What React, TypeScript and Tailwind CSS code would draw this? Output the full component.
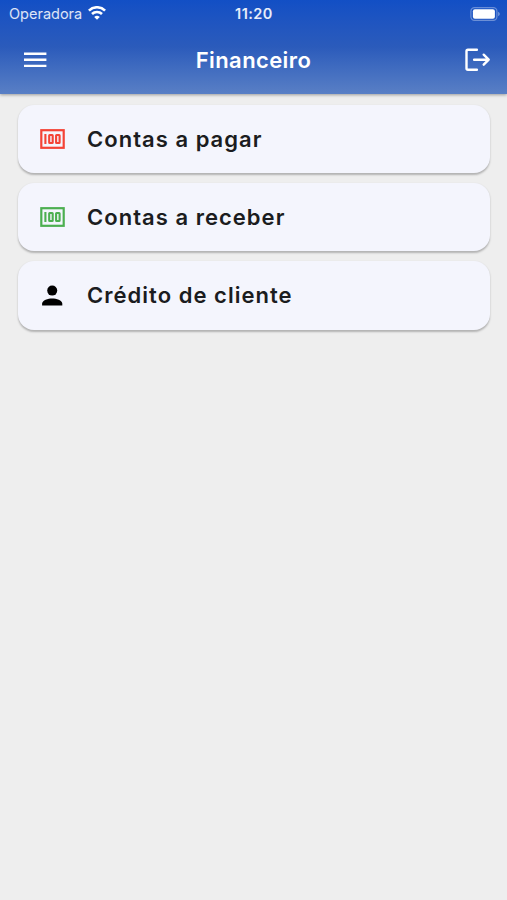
import type { ReactNode } from 'react';

interface MenuItem {
  label: string;
  icon: ReactNode;
}

function MoneyIcon({ className }: { className: string }) {
  return (
    <svg width="25" height="20" viewBox="0 0 25 20" fill="none" stroke="currentColor" className={className}>
      <rect x="1.3" y="1.2" width="22.4" height="17.6" strokeWidth="2.2" />
      <path d="M5.4 5v10" strokeWidth="2.1" />
      <rect x="9.2" y="6" width="3.5" height="8" rx="0.5" strokeWidth="2.1" />
      <rect x="16.1" y="6" width="3.5" height="8" rx="0.5" strokeWidth="2.1" />
    </svg>
  );
}

function PersonIcon() {
  return (
    <svg width="25" height="21" viewBox="0 0 25 21" fill="currentColor" className="text-black">
      <circle cx="12.2" cy="5.6" r="5" />
      <path d="M2.1 20.5v-1.8c0-3.5 6-5.2 10.1-5.2s10.1 1.7 10.1 5.2v1.8z" />
    </svg>
  );
}

const items: MenuItem[] = [
  { label: 'Contas a pagar',     icon: <MoneyIcon className="text-[#f44336]" /> },
  { label: 'Contas a receber',   icon: <MoneyIcon className="text-[#4caf50]" /> },
  { label: 'Crédito de cliente', icon: <PersonIcon /> },
];

function WifiIcon() {
  return (
    <svg width="18" height="14" viewBox="0 0 18 14" fill="none" stroke="currentColor" strokeWidth="2.6">
      <path d="M0.9 4.6a11.5 11.5 0 0 1 16.2 0" />
      <path d="M4 8a7.1 7.1 0 0 1 10 0" />
      <path d="M9 13.8 6.2 11a4 4 0 0 1 5.6 0Z" fill="currentColor" stroke="none" />
    </svg>
  );
}

function BatteryIcon() {
  return (
    <svg width="30" height="14" viewBox="0 0 30 14">
      <rect x="0.9" y="0.6" width="26" height="12.8" rx="3.6" fill="none" stroke="#fff" strokeOpacity="0.35" strokeWidth="1.2" />
      <rect x="2.9" y="2.3" width="22" height="9.4" rx="2" fill="#fff" />
      <path d="M28.1 4.8c2.2.8 2.2 3.6 0 4.4z" fill="#fff" fillOpacity="0.4" />
    </svg>
  );
}

function LogoutIcon() {
  return (
    <svg width="26" height="24" viewBox="0 0 26 24" fill="none" stroke="currentColor" strokeWidth="2.4" strokeLinecap="round" strokeLinejoin="round">
      <path d="M11.9 1.7H3Q1.5 1.7 1.5 3.2V20.2Q1.5 21.7 3 21.7H11.9" />
      <path d="M9.1 11.7H23.6M18.7 6.7 23.7 11.7 18.7 16.7" />
    </svg>
  );
}

function Header() {
  return (
    <header className="relative h-[94px] bg-linear-to-b from-[#124fc5] via-[#2b5bbb] to-[#597fc5] text-white shadow-[0_1px_3px_rgba(0,0,0,0.35)]">
      <div className="grid h-7 grid-cols-3 items-center pl-[9px] pr-[7px]">
        <div className="flex items-center gap-[6px] text-[14.5px] text-white/85">
          <span>Operadora</span>
          <span className="-mt-0.5 text-white"><WifiIcon /></span>
        </div>
        <div className="-ml-px text-center text-[14.5px] font-semibold tracking-[0.45px] text-white/90">11:20</div>
        <div className="-mt-px flex justify-end"><BatteryIcon /></div>
      </div>
      <div className="grid h-16 grid-cols-[80px_1fr_80px] items-center">
        <button type="button" aria-label="Menu" className="ml-6 text-white">
          <svg width="23" height="16" viewBox="0 0 23 16" fill="none" stroke="currentColor" strokeWidth="2.4">
            <path d="M0 1.7h22.4M0 7.8h22.4M0 13.9h22.4" />
          </svg>
        </button>
        <h1 className="text-center text-[22px] font-semibold leading-7 tracking-[0.4px]">Financeiro</h1>
        <button type="button" aria-label="Sair" className="mr-4 flex justify-end"><LogoutIcon /></button>
      </div>
    </header>
  );
}

export default function App() {
  return (
    <div className="min-h-[900px] bg-[#eeeeee] font-['Inter',sans-serif]">
      <Header />
      <main className="flex flex-col gap-[10px] pl-[18px] pr-[17px] pt-[11px]">
        {items.map(item => (
          <button
            key={item.label}
            type="button"
            className="flex h-[68.2px] items-center rounded-2xl bg-[#f4f5fd] pl-[22px] text-left shadow-[0_1.5px_2px_rgba(0,0,0,0.25)]"
          >
            {item.icon}
            <span className="ml-[22px] text-[22px] font-semibold leading-7 tracking-[1.03px] text-[#1b1c20]">
              {item.label}
            </span>
          </button>
        ))}
      </main>
    </div>
  );
}
